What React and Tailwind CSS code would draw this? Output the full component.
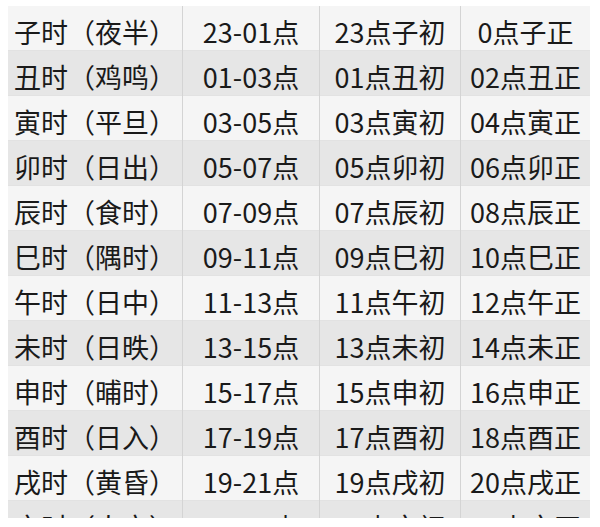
import React from "react";

const rows = [
  ["子时（夜半）", "23-01点", "23点子初", "0点子正"],
  ["丑时（鸡鸣）", "01-03点", "01点丑初", "02点丑正"],
  ["寅时（平旦）", "03-05点", "03点寅初", "04点寅正"],
  ["卯时（日出）", "05-07点", "05点卯初", "06点卯正"],
  ["辰时（食时）", "07-09点", "07点辰初", "08点辰正"],
  ["巳时（隅时）", "09-11点", "09点巳初", "10点巳正"],
  ["午时（日中）", "11-13点", "11点午初", "12点午正"],
  ["未时（日昳）", "13-15点", "13点未初", "14点未正"],
  ["申时（晡时）", "15-17点", "15点申初", "16点申正"],
  ["酉时（日入）", "17-19点", "17点酉初", "18点酉正"],
  ["戌时（黄昏）", "19-21点", "19点戌初", "20点戌正"],
  ["亥时（人定）", "21-23点", "21点亥初", "22点亥正"],
];

const App = () => {
  return (
    <div className="w-[600px] h-[527px] bg-white pt-[6px] pl-[8px]">
      <div
        className="w-[582px] h-[512px] overflow-hidden text-[#1a1a1a] text-[27px]"
        style={{ fontFamily: '"Noto Sans CJK SC", "Noto Sans", sans-serif' }}
      >
        {rows.map((r, i) => (
          <div
            key={i}
            className={`grid grid-cols-[175px_137px_141px_129px] h-[45px] border-b border-[#e2e2e2] ${
              i % 2 === 0 ? "bg-[#f5f5f5]" : "bg-[#e6e6e6]"
            }`}
          >
            {r.map((c, j) => (
              <div
                key={j}
                className={`flex items-center justify-center pt-[6px] whitespace-nowrap ${
                  j < 3 ? "border-r border-[#d4d4d4]" : ""
                }`}
              >
                {c}
              </div>
            ))}
          </div>
        ))}
      </div>
    </div>
  );
};

export default App;
